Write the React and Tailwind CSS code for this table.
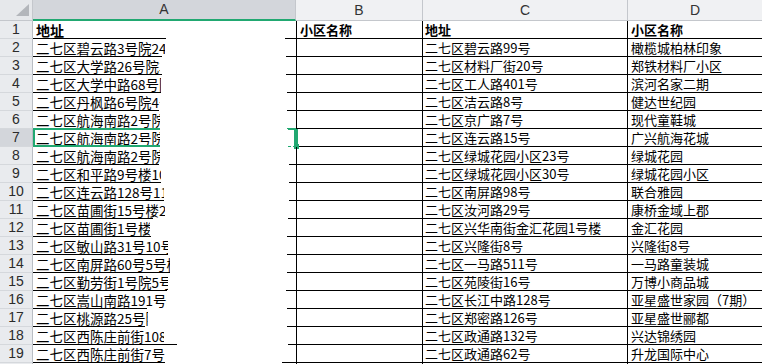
import React from "react";

const aRows = [
  { t: "地址", b: true, tw: "w-[133px]", lw: "w-[133px]", sw: "w-[11px]" },
  { t: "二七区碧云路3号院24号楼", tw: "w-[132px]", lw: "w-[129px]", sw: "w-[10px]" },
  { t: "二七区大学路26号院3号楼", tw: "w-[127px]", lw: "w-[129px]", sw: "w-[10px]" },
  { t: "二七区大学中路68号院", tw: "w-[128px]", lw: "w-[128px]", sw: "w-[9px]" },
  { t: "二七区丹枫路6号院4号楼", tw: "w-[127px]", lw: "w-[126px]", sw: "w-[9px]" },
  { t: "二七区航海南路2号院", tw: "w-[127px]", lw: "w-[127px]", sw: "w-[9px]" },
  { t: "二七区航海南路2号院", tw: "w-[125px]", lw: "w-[125px]", sw: "w-[8px]", sel: true },
  { t: "二七区航海南路2号院", tw: "w-[127px]", lw: "w-[126px]", sw: "w-[7px]" },
  { t: "二七区和平路9号楼10号", tw: "w-[128px]", lw: "w-[128px]", sw: "w-[7px]" },
  { t: "二七区连云路128号11号", tw: "w-[131px]", lw: "w-[131px]", sw: "w-[7px]" },
  { t: "二七区苗圃街15号楼2号", tw: "w-[132px]", lw: "w-[120px]", sw: "w-[8px]" },
  { t: "二七区苗圃街1号楼4号", tw: "w-[117px]", lw: "w-[118px]", sw: "w-[9px]" },
  { t: "二七区敏山路31号10号", tw: "w-[135px]", lw: "w-[135px]", sw: "w-[9px]" },
  { t: "二七区南屏路60号5号楼", tw: "w-[137px]", lw: "w-[137px]", sw: "w-[9px]" },
  { t: "二七区勤劳街1号院5号楼", tw: "w-[135px]", lw: "w-[134px]", sw: "w-[10px]" },
  { t: "二七区嵩山南路191号院", tw: "w-[134px]", lw: "w-[114px]", sw: "w-[9px]" },
  { t: "二七区桃源路25号院", tw: "w-[115px]", lw: "w-[112px]", sw: "w-[9px]" },
  { t: "二七区西陈庄前街108号", tw: "w-[131px]", lw: "w-[144px]", sw: "w-[8px]" },
  { t: "二七区西陈庄前街7号楼", tw: "w-[132px]", lw: "w-[132px]", sw: "w-[14px]" },
];

const cRows = [
  "地址",
  "二七区碧云路99号",
  "二七区材料厂街20号",
  "二七区工人路401号",
  "二七区洁云路8号",
  "二七区京广路7号",
  "二七区连云路15号",
  "二七区绿城花园小区23号",
  "二七区绿城花园小区30号",
  "二七区南屏路98号",
  "二七区汝河路29号",
  "二七区兴华南街金汇花园1号楼",
  "二七区兴隆街8号",
  "二七区一马路511号",
  "二七区苑陵街16号",
  "二七区长江中路128号",
  "二七区郑密路126号",
  "二七区政通路132号",
  "二七区政通路62号",
];

const dRows = [
  "小区名称",
  "橄榄城柏林印象",
  "郑铁材料厂小区",
  "滨河名家二期",
  "健达世纪园",
  "现代童鞋城",
  "广兴航海花城",
  "绿城花园",
  "绿城花园小区",
  "联合雅园",
  "康桥金域上郡",
  "金汇花园",
  "兴隆街8号",
  "一马路童装城",
  "万博小商品城",
  "亚星盛世家园（7期）",
  "亚星盛世郦都",
  "兴达锦绣园",
  "升龙国际中心",
];

function ACell({ r, idx }) {
  const sel = !!r.sel;
  const beforeSel = idx === 5;
  return (
    <div className={`flex h-[18px] flex-col bg-white ${sel ? "border-l-2 border-[#21a871]" : ""}`}>
      <div className="flex h-[17px]">
        <div
          className={`${r.tw} overflow-hidden whitespace-nowrap ${sel ? "border-t border-b border-[#21a871] pl-[1px] pt-[1px] leading-[14px]" : "pl-[3px] pt-[1px] leading-[16px]"} ${r.b ? "font-bold text-[14px]" : "text-[13.5px]"}`}
        >
          {r.t}
        </div>
        <div className="flex-1" />
        <div className={`${r.sw} ${sel ? "border-t border-r-2 border-[#21a871]" : ""}`} />
      </div>
      <div className="flex h-px">
        <div className={`${r.lw} ${sel || beforeSel ? "bg-[#21a871]" : "bg-black"}`} />
        <div className="flex-1" />
        {sel ? (
          <div className={`${r.sw} flex justify-between`}>
            <div className="w-[3px] bg-[#21a871]" />
            <div className="w-[3px] bg-[#21a871]" />
          </div>
        ) : (
          <div className={`${r.sw} ${beforeSel ? "bg-[#21a871]" : "bg-black"}`} />
        )}
      </div>
    </div>
  );
}

function Corner() {
  return (
    <div className="flex h-[21px] items-end justify-end border-r border-b border-[#c4c7cc] bg-[#e6e8eb] pr-[3px] pb-[4px]">
      <svg width="13" height="12" viewBox="0 0 13 12">
        <polygon points="13,0 13,12 0,12" fill="#b3b6bb" />
      </svg>
    </div>
  );
}

export default function App() {
  return (
    <div className="h-[364px] w-[762px] overflow-hidden bg-white font-['Noto_Sans_CJK_SC',sans-serif] text-black">
      <div className="grid grid-cols-[33px_263px_127px_205px_134px]">
        <Corner />
        <div className="flex h-[21px] items-center justify-center border-r border-b-2 border-r-[#c4c7cc] border-b-[#21a871] bg-[#d3d6db] font-['Liberation_Sans',sans-serif] text-[14px] text-[#333]">
          A
        </div>
        <div className="flex h-[21px] items-center justify-center border-r border-b border-[#c4c7cc] bg-[#f0f1f3] font-['Liberation_Sans',sans-serif] text-[14px] text-[#333]">
          B
        </div>
        <div className="flex h-[21px] items-center justify-center border-r border-b border-[#c4c7cc] bg-[#f0f1f3] font-['Liberation_Sans',sans-serif] text-[14px] text-[#333]">
          C
        </div>
        <div className="flex h-[21px] items-center justify-center border-b border-[#c4c7cc] bg-[#f0f1f3] font-['Liberation_Sans',sans-serif] text-[14px] text-[#333]">
          D
        </div>

        {aRows.map((r, i) => (
          <React.Fragment key={i}>
            <div
              className={`flex h-[18px] items-center justify-center border-r border-b border-r-[#b9bdc3] border-b-[#d5d8dc] font-['Liberation_Sans',sans-serif] text-[14px] text-[#2b2b2b] ${r.sel ? "bg-[#d3d6db]" : "bg-[#e9ebee]"}`}
            >
              {i + 1}
            </div>
            <ACell r={r} idx={i} />
            <div
              className={`relative h-[18px] whitespace-nowrap border-l border-r border-b border-r-black border-b-black pl-[3px] pt-[1px] text-[13px] leading-[16px] ${r.sel ? "border-l-2 border-l-[#21a871]" : "border-l-black"} ${i === 0 ? "font-bold" : ""}`}
            >
              {i === 0 ? "小区名称" : ""}
              {r.sel ? (
                <div className="absolute -left-[4px] -bottom-[3px] h-[5px] w-[5px] bg-[#21a871]" />
              ) : null}
            </div>
            <div
              className={`h-[18px] whitespace-nowrap border-r border-b border-black pl-[2px] pt-[1px] text-[13px] leading-[16px] ${i === 0 ? "font-bold" : ""}`}
            >
              {cRows[i]}
            </div>
            <div
              className={`h-[18px] whitespace-nowrap border-b border-black pl-[3px] pt-[1px] text-[13px] leading-[16px] ${i === 0 ? "font-bold" : ""}`}
            >
              {dRows[i]}
            </div>
          </React.Fragment>
        ))}
        <div className="h-[18px] border-r border-[#b9bdc3] bg-[#e9ebee]" />
        <div className="h-[18px]" />
        <div className="h-[18px] border-l border-r border-black" />
        <div className="h-[18px] border-r border-black" />
        <div className="h-[18px]" />
      </div>
    </div>
  );
}
